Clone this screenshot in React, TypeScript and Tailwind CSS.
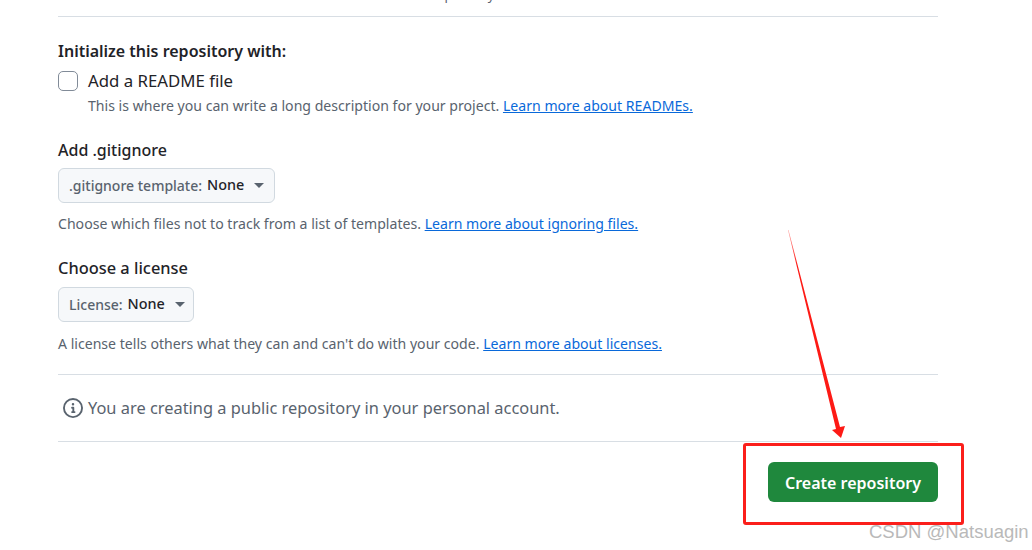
function Caret() {
  return <span className="ml-[10px] inline-block h-0 w-0 border-x-[5px] border-t-[5px] border-x-transparent border-t-[#59636e]" />;
}

function Picker({ label, width }: { label: string; width: string }) {
  return (
    <button className={`flex h-[35px] items-center rounded-md border border-[#d1d9e0] bg-[#f6f8fa] pl-[10px] text-sm font-medium text-[#59636e] ${width}`}>
      <span>{label}</span>
      <span className="ml-[5px] text-[14.4px] text-[#1f2328]">None</span>
      <Caret />
    </button>
  );
}

function Doc({ text, link }: { text: string; link: string }) {
  return (
    <p className="text-[14.1px] leading-5 text-[#59636e]">
      {text} <a href="#" className="text-[#0969da] underline">{link}</a>
    </p>
  );
}

export default function App() {
  return (
    <div className="relative h-[550px] w-[1032px] overflow-hidden bg-white font-['Noto_Sans',sans-serif] text-[#1f2328]">
      <div className="ml-[58px] w-[880px]">
        <div className="flex h-[17px] flex-col border-b border-[#d8dee4]">
          <p className="-mt-[15px] ml-[374px] text-[13px] leading-5 text-[#59636e]">repository</p>
        </div>

        <h2 className="mt-[23px] text-base font-semibold leading-[22px]">Initialize this repository with:</h2>
        <label className="mt-[9px] flex items-center gap-[10px]">
          <span className="h-5 w-5 rounded-[5px] border border-[#818b98] bg-white" />
          <span className="text-[16.8px] leading-5">Add a README file</span>
        </label>
        <div className="ml-[30px] mt-[5px]">
          <Doc text="This is where you can write a long description for your project." link="Learn more about READMEs." />
        </div>

        <h2 className="mt-[23px] text-base font-medium leading-[22px]">Add .gitignore</h2>
        <div className="mt-[7px]">
          <Picker label=".gitignore template:" width="w-[217px]" />
        </div>
        <div className="mt-[11px]">
          <Doc text="Choose which files not to track from a list of templates." link="Learn more about ignoring files." />
        </div>

        <h2 className="mt-[23px] text-[16.4px] font-medium leading-[22px]">Choose a license</h2>
        <div className="mt-[8px]">
          <Picker label="License:" width="w-[136px]" />
        </div>
        <div className="mt-[12px]">
          <Doc text="A license tells others what they can and can't do with your code." link="Learn more about licenses." />
        </div>

        <div className="mt-[20px] flex h-[68px] items-center border-y border-[#d8dee4] pl-[5px]">
          <svg width="20" height="20" viewBox="0 0 16 16" fill="#59636e">
            <path d="M0 8a8 8 0 1 1 16 0A8 8 0 0 1 0 8Zm8-6.5a6.5 6.5 0 1 0 0 13 6.5 6.5 0 0 0 0-13ZM6.5 7.75A.75.75 0 0 1 7.25 7h1a.75.75 0 0 1 .75.75v2.75h.25a.75.75 0 0 1 0 1.5h-2a.75.75 0 0 1 0-1.5h.25v-2h-.25a.75.75 0 0 1-.75-.75ZM8 6a1 1 0 1 1 0-2 1 1 0 0 1 0 2Z" />
          </svg>
          <span className="ml-[5px] pt-px text-[16.4px] text-[#59636e]">You are creating a public repository in your personal account.</span>
        </div>

        <div className="mt-[20px] flex justify-end">
          <button className="flex h-[40px] w-[170px] items-center justify-center rounded-md bg-[#1f883d] pt-px text-base font-semibold text-white">
            Create repository
          </button>
        </div>
      </div>

      {/* screenshot annotations */}
      <div className="absolute left-[743px] top-[443px] h-[82px] w-[221px] rounded-[3px] border-[3px] border-[#fb1f1b]" />
      <svg className="absolute left-[780px] top-[225px]" width="80" height="220" viewBox="0 0 80 220">
        <defs>
          <linearGradient id="arrowFade" x1="0" y1="5" x2="0" y2="40" gradientUnits="userSpaceOnUse">
            <stop offset="0" stopColor="#fd1a15" stopOpacity="0.4" />
            <stop offset="1" stopColor="#fd1a15" />
          </linearGradient>
        </defs>
        <polygon points="8.5,5 60,202 65,201 61,213 52,205 56,204 8,5" fill="url(#arrowFade)" />
      </svg>
      <span className="absolute left-[869px] top-[521px] font-['Liberation_Sans',sans-serif] text-[18.5px] leading-[22px] text-[#b9b9b9]">CSDN @Natsuagin</span>
    </div>
  );
}
